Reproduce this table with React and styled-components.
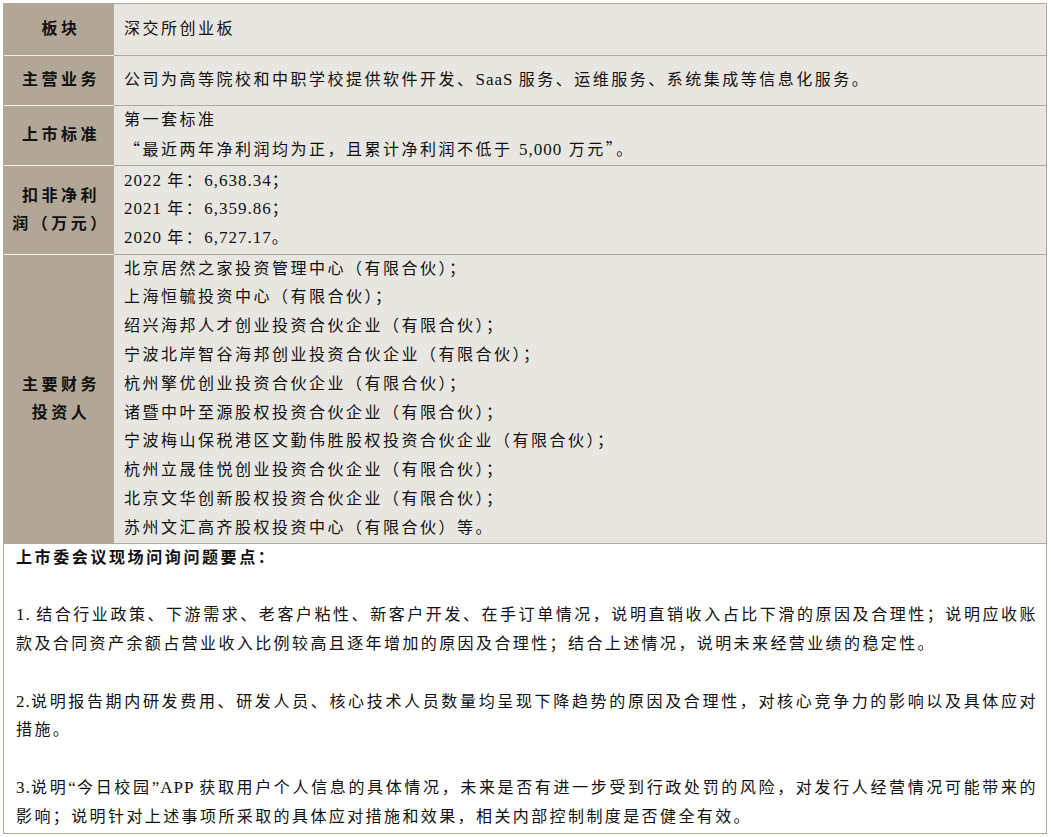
import React from 'react';
import styled, { createGlobalStyle } from 'styled-components';

const LABEL_BG = '#b2a797';
const CELL_BG = '#e8e6e1';
const RULE = '#b3a99b';
const LABEL_RULE = '#f3f1ec';
const INK = '#111111';

const GlobalStyle = createGlobalStyle`
  html, body { margin: 0; padding: 0; background: #ffffff; }
  body {
    font-family: "Liberation Serif", "Noto Sans CJK SC", serif;
    color: ${INK};
  }
`;

const Page = styled.div`
  padding: 3px 0 6px 3px;
`;

const Sheet = styled.div`
  width: 1044px;
  box-sizing: border-box;
  border: 1px solid ${RULE};
`;

const Row = styled.div`
  display: grid;
  grid-template-columns: 110px 1fr;
`;

const Label = styled.div`
  display: flex;
  align-items: center;
  justify-content: center;
  text-align: center;
  background: ${LABEL_BG};
  border-bottom: 1px solid ${(p) => (p.$last ? LABEL_BG : LABEL_RULE)};
  font-family: "Liberation Serif", "Noto Sans CJK SC", serif;
  font-weight: 700;
  font-size: 16px;
  letter-spacing: 3.5px;
  line-height: 28px;
  padding: 0 2px 0 6px;
`;

const Cell = styled.div`
  background: ${CELL_BG};
  border-bottom: 1px solid ${RULE};
  padding: ${(p) => p.$pad || '0'} 10px;
  font-size: 16px;
  letter-spacing: 2.5px;
  line-height: 28.8px;
`;

const Line = styled.div`
  white-space: nowrap;
`;

const Latin = styled.span`
  font-size: 17px;
  letter-spacing: 1px;
`;

const Wide = styled.span`
  font-family: "Noto Sans CJK SC", sans-serif;
`;

const Notes = styled.div`
  background: #ffffff;
  padding: 0 8px 1px 12px;
  font-size: 16px;
  letter-spacing: 2.4px;
  line-height: 28.8px;
`;

const Heading = styled.div`
  font-weight: 700;
  letter-spacing: 2.6px;
`;

const Para = styled.div`
  margin-top: 28.8px;
`;

const TextLine = styled.div`
  white-space: nowrap;
  text-align: ${(p) => (p.$full ? 'justify' : 'left')};
  text-align-last: ${(p) => (p.$full ? 'justify' : 'auto')};
`;

const investors = [
  '北京居然之家投资管理中心（有限合伙）；',
  '上海恒毓投资中心（有限合伙）；',
  '绍兴海邦人才创业投资合伙企业（有限合伙）；',
  '宁波北岸智谷海邦创业投资合伙企业（有限合伙）；',
  '杭州擎优创业投资合伙企业（有限合伙）；',
  '诸暨中叶至源股权投资合伙企业（有限合伙）；',
  '宁波梅山保税港区文勤伟胜股权投资合伙企业（有限合伙）；',
  '杭州立晟佳悦创业投资合伙企业（有限合伙）；',
  '北京文华创新股权投资合伙企业（有限合伙）；',
  '苏州文汇高齐股权投资中心（有限合伙）等。',
];

const profits = [
  ['2022', '6,638.34', '；'],
  ['2021', '6,359.86', '；'],
  ['2020', '6,727.17', '。'],
];

export default function App() {
  return (
    <>
      <GlobalStyle />
      <Page>
        <Sheet>
          <Row>
            <Label>板块</Label>
            <Cell $pad="11px">深交所创业板</Cell>
          </Row>
          <Row>
            <Label>主营业务</Label>
            <Cell $pad="10px">
              公司为高等院校和中职学校提供软件开发、<Latin>SaaS </Latin>服务、运维服务、系统集成等信息化服务。
            </Cell>
          </Row>
          <Row>
            <Label>上市标准</Label>
            <Cell>
              <Line>第一套标准</Line>
              <Line>
                <Wide>“</Wide>最近两年净利润均为正，且累计净利润不低于 <Latin>5,000</Latin> 万元<Wide>”</Wide>。
              </Line>
            </Cell>
          </Row>
          <Row>
            <Label>
              扣非净利
              <br />
              润（万元）
            </Label>
            <Cell $pad="0.5px">
              {profits.map(([y, v, end]) => (
                <Line key={y}>
                  <Latin>{y} </Latin>年：<Latin>{v}</Latin>
                  {end}
                </Line>
              ))}
            </Cell>
          </Row>
          <Row>
            <Label $last>
              主要财务
              <br />
              投资人
            </Label>
            <Cell>
              {investors.map((t) => (
                <Line key={t}>{t}</Line>
              ))}
            </Cell>
          </Row>
          <Notes>
            <Heading>上市委会议现场问询问题要点：</Heading>
            <Para>
              <TextLine $full>
                <Latin>1. </Latin>结合行业政策、下游需求、老客户粘性、新客户开发、在手订单情况，说明直销收入占比下滑的原因及合理性；说明应收账
              </TextLine>
              <TextLine>款及合同资产余额占营业收入比例较高且逐年增加的原因及合理性；结合上述情况，说明未来经营业绩的稳定性。</TextLine>
            </Para>
            <Para>
              <TextLine $full>
                <Latin>2.</Latin>说明报告期内研发费用、研发人员、核心技术人员数量均呈现下降趋势的原因及合理性，对核心竞争力的影响以及具体应对
              </TextLine>
              <TextLine>措施。</TextLine>
            </Para>
            <Para>
              <TextLine $full>
                <Latin>3.</Latin>说明<Latin>“</Latin>今日校园<Latin>”APP </Latin>获取用户个人信息的具体情况，未来是否有进一步受到行政处罚的风险，对发行人经营情况可能带来的
              </TextLine>
              <TextLine>影响；说明针对上述事项所采取的具体应对措施和效果，相关内部控制制度是否健全有效。</TextLine>
            </Para>
          </Notes>
        </Sheet>
      </Page>
    </>
  );
}
